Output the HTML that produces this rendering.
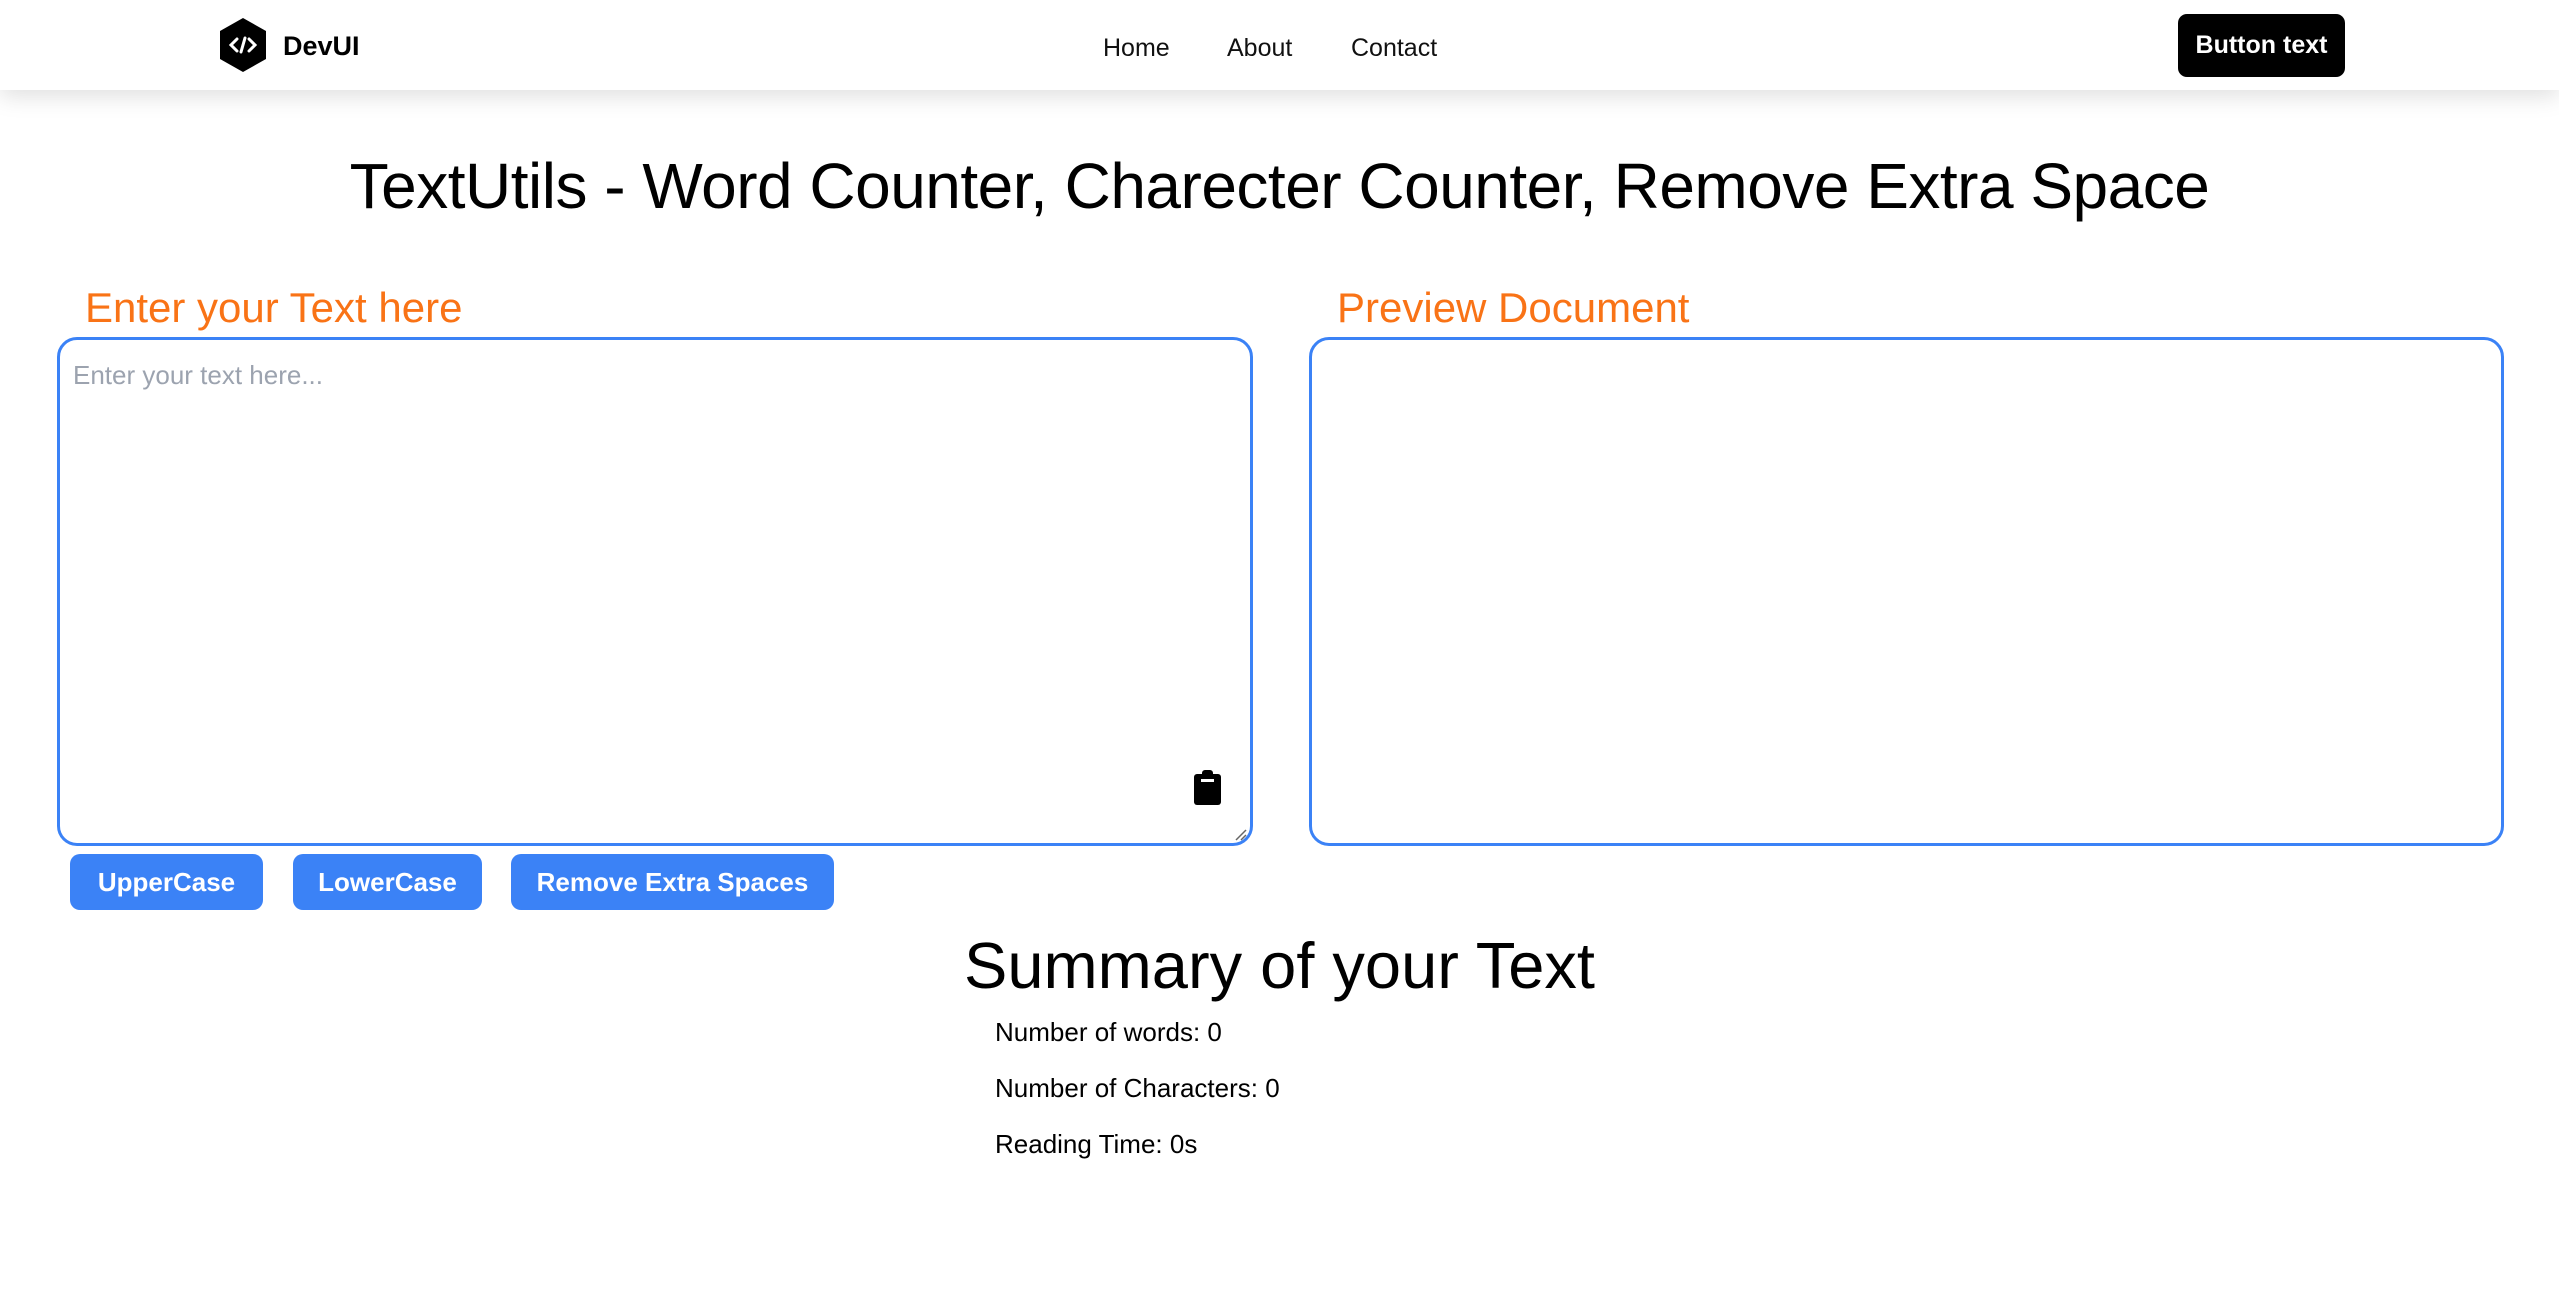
<!DOCTYPE html>
<html><head><meta charset="utf-8"><style>
*{margin:0;padding:0;box-sizing:border-box}
body{width:2559px;height:1304px;background:#fff;font-family:"Liberation Sans",sans-serif;position:relative;overflow:hidden;color:#000}
.nav{position:absolute;left:0;top:0;width:2559px;height:90px;background:#fff;box-shadow:0 6px 22px rgba(0,0,0,.13)}
.abs{position:absolute;white-space:nowrap}
.ta{position:absolute;border:3px solid #3b82f6;border-radius:20px;background:#fff}
.btn{position:absolute;top:854px;height:56px;background:#3b82f6;color:#fff;border-radius:10px;font-size:26px;font-weight:bold;display:flex;align-items:center;justify-content:center}
.lab{color:#f97316;font-size:42px;top:284px}
.li{font-size:26px;left:995px}
</style></head><body>
<div class="nav"></div>
<svg class="abs" style="left:219px;top:18px" width="48" height="54" viewBox="0 0 48 54"><polygon points="24,0 47,13 47,41 24,54 1,41 1,13" fill="#000"/><path d="M18 21 L12 27 L18 33 M30 21 L36 27 L30 33 M26 20 L22 34" stroke="#fff" stroke-width="3" fill="none" stroke-linecap="round"/></svg>
<div class="abs" style="left:283px;top:31px;font-size:27px;font-weight:bold">DevUI</div>
<div class="abs" style="left:1103px;top:34px;font-size:25px;color:#111">Home</div>
<div class="abs" style="left:1227px;top:34px;font-size:25px;color:#111">About</div>
<div class="abs" style="left:1351px;top:34px;font-size:25px;color:#111">Contact</div>
<div class="abs" style="left:2178px;top:14px;width:167px;height:63px;background:#000;border-radius:9px;color:#fff;font-size:25px;font-weight:bold;display:flex;align-items:center;justify-content:center">Button text</div>
<div class="abs" style="left:0;width:2559px;text-align:center;top:149px;font-size:64px;letter-spacing:-0.5px">TextUtils - Word Counter, Charecter Counter, Remove Extra Space</div>
<div class="abs lab" style="left:85px">Enter your Text here</div>
<div class="abs lab" style="left:1337px">Preview Document</div>
<div class="ta" style="left:57px;top:337px;width:1196px;height:509px"></div>
<div class="ta" style="left:1309px;top:337px;width:1195px;height:509px"></div>
<div class="abs" style="left:73px;top:360px;font-size:26px;color:#9ca3af">Enter your text here...</div>
<svg class="abs" style="left:1194px;top:770px" width="27" height="35" viewBox="0 0 27 35"><rect x="0" y="4" width="27" height="31" rx="3" fill="#000"/><rect x="8" y="0" width="11" height="7" rx="3" fill="#000"/><rect x="7" y="9" width="13" height="3" fill="#fff"/></svg>
<svg class="abs" style="left:1234px;top:828px" width="14" height="14"><path d="M2 12 L12 2 M7 12 L12 7" stroke="#666" stroke-width="1.5"/></svg>
<div class="btn" style="left:70px;width:193px">UpperCase</div>
<div class="btn" style="left:293px;width:189px">LowerCase</div>
<div class="btn" style="left:511px;width:323px">Remove Extra Spaces</div>
<div class="abs" style="left:0;width:2559px;text-align:center;top:928px;font-size:65px">Summary of your Text</div>
<div class="abs li" style="top:1017px">Number of words: 0</div>
<div class="abs li" style="top:1073px">Number of Characters: 0</div>
<div class="abs li" style="top:1129px">Reading Time: 0s</div>
</body></html>
